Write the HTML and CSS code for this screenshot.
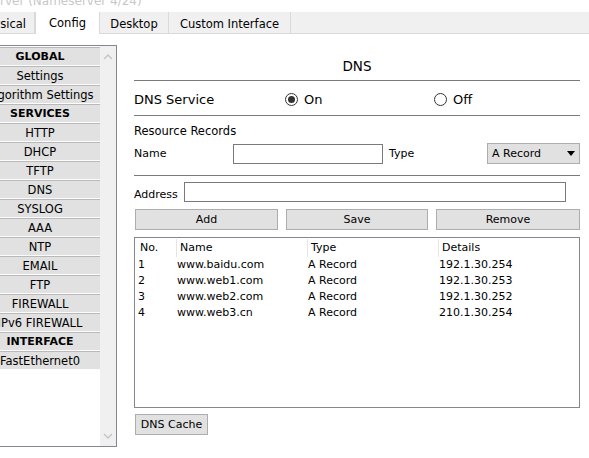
FILE: index.html
```html
<!DOCTYPE html>
<html lang="en">

<head>
    <meta charset="UTF-8">
    <title>Server DNS Config</title>
    <link rel="stylesheet" href="styles.css">
</head>

<body>
    <div class="window">
        <div class="caption"><span>rver (Nameserver 4/24)</span></div>

        <div class="tabs">
            <div class="tab tab-cut"><span>Physical</span></div>
            <div class="tab active">Config</div>
            <div class="tab">Desktop</div>
            <div class="tab">Custom Interface</div>
        </div>

        <div class="content">
            <!-- left menu -->
            <div class="side">
                <div class="menu">
                    <div class="item head"><span>GLOBAL</span></div>
                    <div class="item"><span>Settings</span></div>
                    <div class="item"><span>Algorithm Settings</span></div>
                    <div class="item head"><span>SERVICES</span></div>
                    <div class="item"><span>HTTP</span></div>
                    <div class="item"><span>DHCP</span></div>
                    <div class="item"><span>TFTP</span></div>
                    <div class="item"><span>DNS</span></div>
                    <div class="item"><span>SYSLOG</span></div>
                    <div class="item"><span>AAA</span></div>
                    <div class="item"><span>NTP</span></div>
                    <div class="item"><span>EMAIL</span></div>
                    <div class="item"><span>FTP</span></div>
                    <div class="item"><span>FIREWALL</span></div>
                    <div class="item"><span>IPv6 FIREWALL</span></div>
                    <div class="item head"><span>INTERFACE</span></div>
                    <div class="item"><span>FastEthernet0</span></div>
                </div>
                <div class="scrollbar">
                    <svg width="10" height="6" viewBox="0 0 10 6"><path d="M1 5 L5 1 L9 5" fill="none" stroke="#c4c4c4" stroke-width="1.4"/></svg>
                    <svg width="10" height="6" viewBox="0 0 10 6"><path d="M1 1 L5 5 L9 1" fill="none" stroke="#c4c4c4" stroke-width="1.4"/></svg>
                </div>
            </div>

            <!-- DNS panel -->
            <div class="panel">
                <div class="panel-title">DNS</div>

                <div class="service-row">
                    <div>DNS Service</div>
                    <label class="radio"><span class="dot checked"></span>On</label>
                    <label class="radio"><span class="dot"></span>Off</label>
                </div>

                <div class="records">
                    <div class="records-title">Resource Records</div>
                    <div class="name-row">
                        <span class="lbl-name">Name</span>
                        <div class="field name-field"></div>
                        <span class="lbl-type">Type</span>
                        <div class="select">A Record
                            <svg width="8" height="5" viewBox="0 0 8 5"><path d="M0 0 H8 L4 5 Z" fill="#000"/></svg>
                        </div>
                    </div>
                </div>

                <div class="address-row">
                    <span>Address</span>
                    <div class="field address-field"></div>
                </div>

                <div class="actions">
                    <button>Add</button>
                    <button>Save</button>
                    <button>Remove</button>
                </div>

                <div class="table">
                    <div class="row thead">
                        <div>No.</div>
                        <div>Name</div>
                        <div>Type</div>
                        <div>Details</div>
                    </div>
                    <div class="row">
                        <div>1</div>
                        <div>www.baidu.com</div>
                        <div>A Record</div>
                        <div>192.1.30.254</div>
                    </div>
                    <div class="row">
                        <div>2</div>
                        <div>www.web1.com</div>
                        <div>A Record</div>
                        <div>192.1.30.253</div>
                    </div>
                    <div class="row">
                        <div>3</div>
                        <div>www.web2.com</div>
                        <div>A Record</div>
                        <div>192.1.30.252</div>
                    </div>
                    <div class="row">
                        <div>4</div>
                        <div>www.web3.cn</div>
                        <div>A Record</div>
                        <div>210.1.30.254</div>
                    </div>
                </div>

                <button class="cache">DNS Cache</button>
            </div>
        </div>
    </div>
</body>

</html>
```

FILE: styles.css
```css
*,
*::before,
*::after {
    box-sizing: border-box;
    margin: 0;
    padding: 0;
}

body {
    background: #fff;
    font-family: "DejaVu Sans", Verdana, sans-serif;
    font-size: 11px;
    color: #000;
}

.window {
    width: 589px;
    height: 458px;
    overflow: hidden;
}

/* faded, cut-off window caption */
.caption {
    height: 12px;
    overflow: hidden;
    color: #c8c8c8;
    font-size: 12px;
    line-height: 12px;
}

.caption span {
    display: block;
    margin-top: -5px;
}

.tabs {
    display: flex;
    height: 22px;
    background: #f0f0f0;
    border-bottom: 1px solid #d9d9d9;
}

.tab {
    display: flex;
    align-items: center;
    justify-content: center;
    height: 21px;
    padding-top: 3px;
    border-right: 1px solid #d9d9d9;
    font-size: 11.5px;
    white-space: nowrap;
}

.tab:nth-child(2) {
    width: 65px;
}

.tab:nth-child(3) {
    width: 69px;
}

.tab:nth-child(4) {
    width: 122px;
}

.tab-cut {
    width: 35px;
    overflow: hidden;
    justify-content: flex-end;
    padding-right: 8px;
}

.tab.active {
    background: #fff;
    height: 22px;
    border-left: 1px solid #d9d9d9;
    padding-top: 0;
    padding-bottom: 1px;
}

.content {
    display: flex;
    align-items: flex-start;
}

/* the window is cut on the left, so the menu starts off-screen */
.side {
    display: flex;
    width: 137px;
    height: 402px;
    margin-top: 11px;
    margin-left: -20px;
    border-top: 1px solid #828790;
    border-right: 1px solid #828790;
    border-bottom: 1px solid #828790;
    background: #fff;
}

.menu {
    width: 120px;
    padding-top: 1px;
}

.item {
    display: flex;
    justify-content: center;
    align-items: center;
    height: 19px;
    overflow: hidden;
    white-space: nowrap;
    font-size: 11.5px;
    background: #e1e1e1;
    border-top: 1px solid #b9b9b9;
    border-bottom: 1px solid #fcfcfc;
}

.item.head {
    font-weight: bold;
    font-size: 11px;
}

.scrollbar {
    width: 16px;
    background: #f0f0f0;
    display: flex;
    flex-direction: column;
    justify-content: space-between;
    align-items: center;
    padding: 8px 0 7px;
}

.panel {
    width: 446px;
    margin-left: 17px;
}

.panel-title {
    text-align: center;
    font-size: 13.5px;
    line-height: 16px;
    padding: 24px 0 6px;
    border-bottom: 1px solid #7a7a7a;
}

.service-row {
    display: grid;
    grid-template-columns: 151px 149px 1fr;
    align-items: center;
    height: 35px;
    font-size: 13px;
    border-bottom: 1px solid #7a7a7a;
    padding-top: 2px;
}

.radio {
    display: flex;
    align-items: center;
    gap: 6px;
}

.dot {
    width: 13px;
    height: 13px;
    border: 1px solid #333;
    border-radius: 50%;
    display: flex;
    align-items: center;
    justify-content: center;
}

.dot.checked::after {
    content: "";
    width: 7px;
    height: 7px;
    border-radius: 50%;
    background: #333;
}

.records {
    padding-top: 8px;
    padding-bottom: 11px;
    border-bottom: 1px solid #7a7a7a;
}

.records-title {
    line-height: 14px;
    font-size: 11.5px;
}

.name-row {
    display: flex;
    align-items: center;
    margin-top: 5px;
    height: 21px;
}

.lbl-name {
    width: 99px;
}

.field {
    height: 20px;
    border: 1px solid #7a7a7a;
    background: #fff;
}

.name-field {
    width: 150px;
}

.lbl-type {
    width: 104px;
    padding-left: 6px;
}

.select {
    display: flex;
    justify-content: space-between;
    align-items: center;
    width: 93px;
    height: 21px;
    padding: 0 4px 0 4px;
    background: #e1e1e1;
    border: 1px solid #adadad;
}

.address-row {
    display: flex;
    align-items: flex-end;
    gap: 6px;
    margin-top: 6px;
}

.address-row span {
    line-height: 14px;
    padding-bottom: 0;
}

.address-field {
    width: 382px;
}

.actions {
    display: grid;
    grid-template-columns: 143px 142px 144px;
    column-gap: 8px;
    margin-top: 7px;
    margin-left: 1px;
}

button {
    font-family: inherit;
    font-size: 11px;
    height: 21px;
    background: #e1e1e1;
    border: 1px solid #adadad;
    color: #000;
}

.table {
    height: 171px;
    margin-top: 7px;
    border: 1px solid #828790;
    padding: 1px 1px 0 2px;
}

.row {
    display: grid;
    grid-template-columns: 39px 131px 131px 1fr;
    height: 16px;
    line-height: 16px;
}

.row > div {
    padding-left: 1px;
    white-space: nowrap;
}

.thead {
    height: 18px;
    line-height: 18px;
}

.thead > div {
    padding-left: 3px;
    border-left: 1px solid #e5e5e5;
}

.thead > div:first-child {
    border-left: none;
}

.cache {
    width: 73px;
    margin-top: 6px;
    margin-left: 1px;
}
```
